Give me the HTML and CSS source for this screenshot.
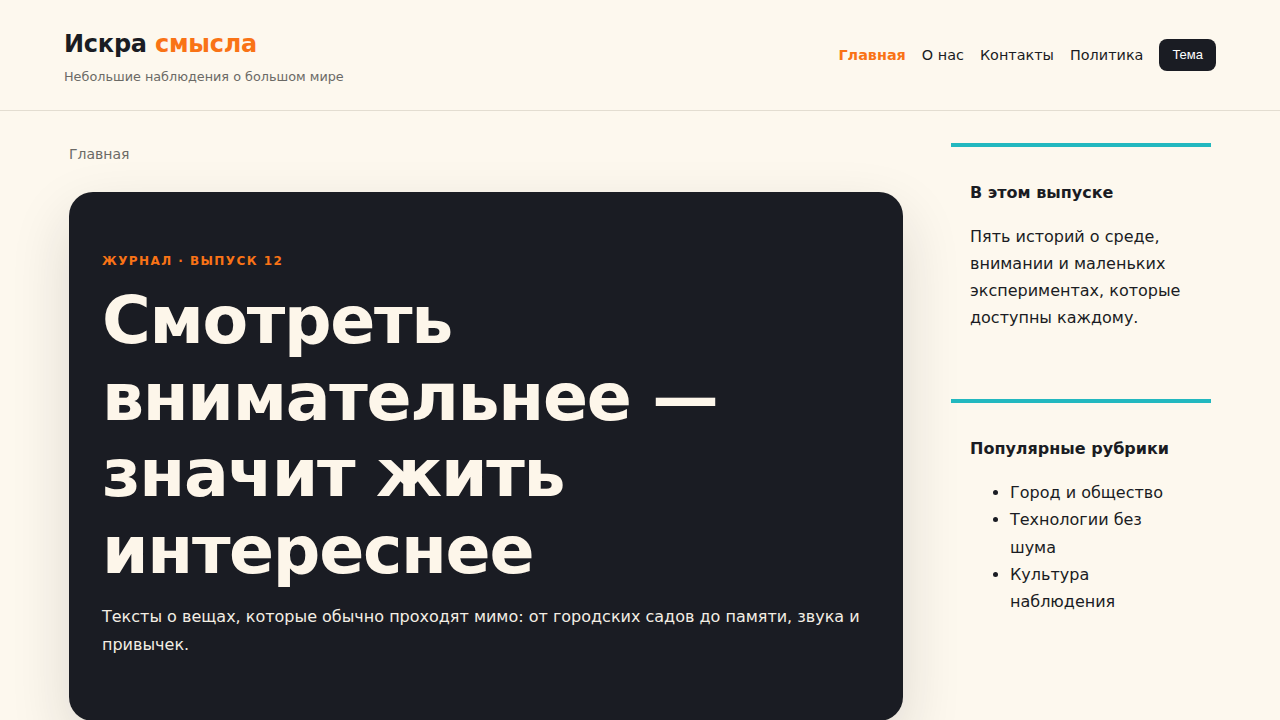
FILE: index.html
```html
<!DOCTYPE html>
<html lang="ru">
<head>
<meta charset="utf-8">
<title>Искра смысла</title>
<link rel="stylesheet" href="styles.css">
</head>
<body>
<header class="site-header">
  <div class="brand">
    <div class="logo">Искра <span class="logo-accent">смысла</span></div>
    <p class="tagline">Небольшие наблюдения о большом мире</p>
  </div>
  <nav class="nav">
    <a class="nav-link is-active" href="#">Главная</a>
    <a class="nav-link" href="#">О нас</a>
    <a class="nav-link" href="#">Контакты</a>
    <a class="nav-link" href="#">Политика</a>
    <button class="theme-btn" type="button">Тема</button>
  </nav>
</header>

<main class="layout">
  <section class="content">
    <div class="breadcrumb">Главная</div>
    <article class="hero">
      <p class="eyebrow">Журнал · Выпуск 12</p>
      <h1 class="hero-title">Смотреть внимательнее — значит жить интереснее</h1>
      <p class="hero-lead">Тексты о вещах, которые обычно проходят мимо: от городских садов до памяти, звука и привычек.</p>
    </article>
  </section>

  <aside class="sidebar">
    <div class="widget">
      <h3 class="widget-title">В этом выпуске</h3>
      <p class="widget-text">Пять историй о среде, внимании и маленьких экспериментах, которые доступны каждому.</p>
    </div>
    <div class="widget">
      <h3 class="widget-title">Популярные рубрики</h3>
      <ul class="widget-list">
        <li>Город и общество</li>
        <li>Технологии без шума</li>
        <li>Культура наблюдения</li>
      </ul>
    </div>
  </aside>
</main>
</body>
</html>
```

FILE: styles.css
```css
* {
  box-sizing: border-box;
}

html, body {
  margin: 0;
  padding: 0;
}

body {
  background: #fdf8ee;
  color: #1a1c23;
  font-family: "DejaVu Sans", "Noto Sans", sans-serif;
  font-size: 16px;
  line-height: 1.7;
}

/* header */
.site-header {
  display: flex;
  justify-content: space-between;
  align-items: flex-start;
  padding: 28px 64px 23px;
  border-bottom: 1px solid #e3ddd1;
}

.logo {
  font-size: 24px;
  font-weight: 700;
  line-height: 32px;
  letter-spacing: -0.01em;
  color: #1a1c23;
}

.logo-accent {
  color: #f97316;
}

.tagline {
  margin: 7px 0 0;
  font-size: 12.8px;
  line-height: 20px;
  color: #6b6a66;
}

.nav {
  display: flex;
  align-items: center;
  gap: 16px;
  margin-top: 11px;
}

.nav-link {
  font-size: 14.4px;
  line-height: 22px;
  color: #1a1c23;
  text-decoration: none;
}

.nav-link.is-active {
  color: #f97316;
  font-weight: 700;
}

.theme-btn {
  font-family: "Liberation Sans", Arial, sans-serif;
  font-size: 13px;
  color: #ffffff;
  background: #1a1c23;
  border: 0;
  border-radius: 8px;
  padding: 8px 13px;
  height: 32px;
  line-height: 16px;
}

/* main layout */
.layout {
  max-width: 1142px;
  margin: 0 auto;
  display: grid;
  grid-template-columns: 1fr 260px;
  gap: 48px;
  padding-top: 31px;
}

.breadcrumb {
  font-size: 14px;
  line-height: 24px;
  color: #6b6a66;
  margin-bottom: 26px;
}

.hero {
  background: #1a1c23;
  color: #fdf6ea;
  border-radius: 24px;
  padding: 59px 33px 62px;
  box-shadow: 0 24px 60px rgba(26, 28, 35, 0.14);
}

.eyebrow {
  margin: 0;
  font-size: 12px;
  font-weight: 700;
  line-height: 20px;
  letter-spacing: 0.12em;
  text-transform: uppercase;
  color: #f97316;
}

.hero-title {
  margin: 11px 0 15px;
  font-size: 66.5px;
  line-height: 76.5px;
  font-weight: 700;
  letter-spacing: -0.02em;
  color: #fdf6ea;
}

.hero-lead {
  margin: 0;
  font-size: 16px;
  line-height: 28px;
  color: #f3eee4;
}

/* sidebar */
.sidebar {
  display: flex;
  flex-direction: column;
  gap: 35px;
  padding-top: 1px;
}

.widget {
  border-top: 4px solid #22b8bf;
  padding: 34px 19px 33px;
}

.widget-title {
  margin: 0 0 18px;
  font-size: 16px;
  line-height: 24px;
  font-weight: 700;
}

.widget-text {
  margin: 0;
  font-size: 16px;
  line-height: 27px;
}

.widget-list {
  margin: 0;
  padding-left: 40px;
  font-size: 16px;
  line-height: 27.25px;
}
```
